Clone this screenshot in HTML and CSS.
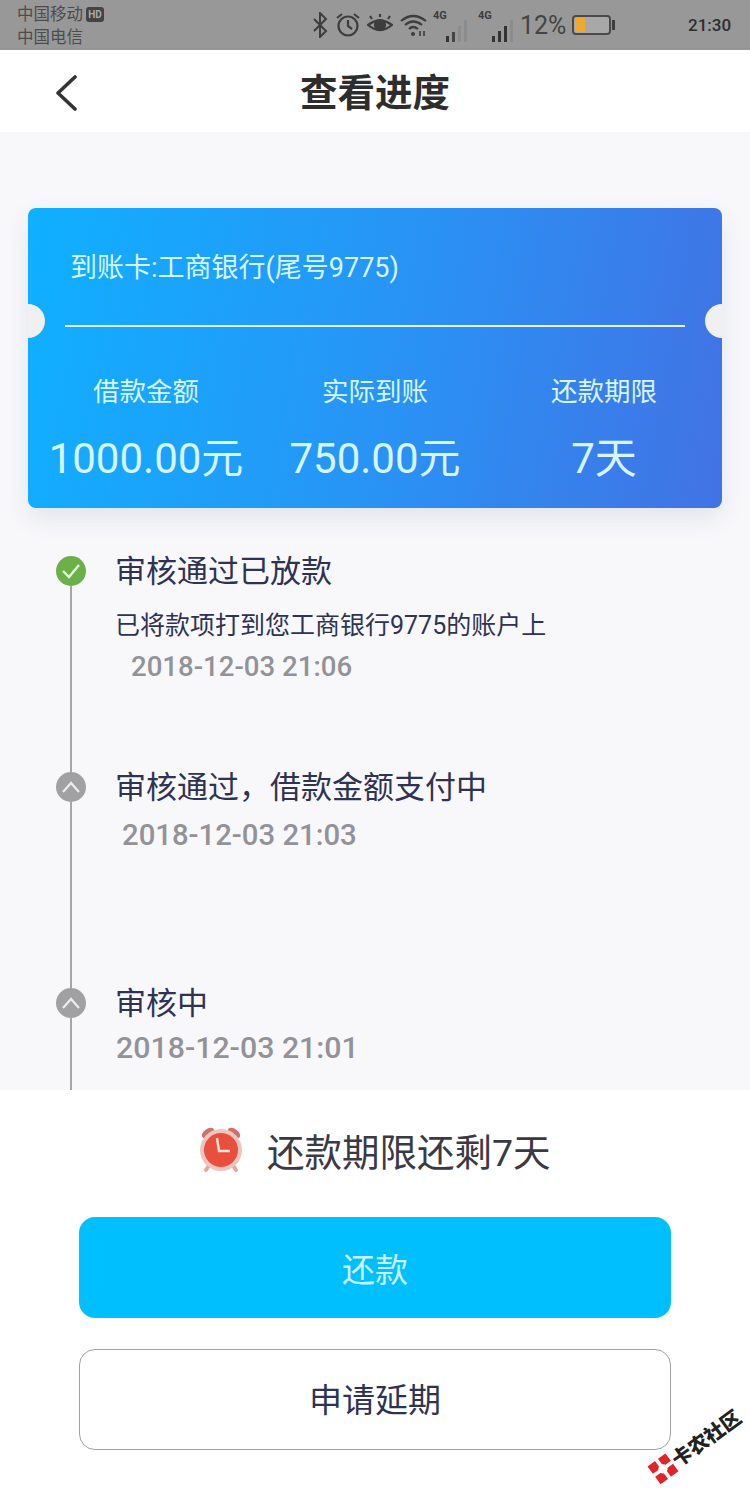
FILE: index.html
```html
<!DOCTYPE html>
<html lang="zh-CN">
<head>
    <meta charset="UTF-8">
    <meta name="viewport" content="width=device-width, initial-scale=1.0">
    <title>查看进度</title>
    <link rel="stylesheet" href="styles.css">
</head>
<body>
    <div class="page">
        <div class="status-bar">
            <div class="carriers">
                <div class="carrier">中国移动 <span class="hd">HD</span></div>
                <div class="carrier">中国电信</div>
            </div>
            <div class="status-icons">
                <svg width="16" height="26" viewBox="0 0 16 26" fill="none" stroke="#3d3d3d" stroke-width="2"><path d="M2 7l12 12-6 6V1l6 6L2 19"/></svg>
                <svg class="ic-alarm" width="26" height="26" viewBox="0 0 26 26" fill="none" stroke="#3d3d3d" stroke-width="2.2"><circle cx="13" cy="14" r="9.5"/><path d="M13 8v6l4 3M2 6l5-4M24 6l-5-4"/></svg>
                <svg class="ic-eye" width="26" height="24" viewBox="0 0 26 24" fill="none" stroke="#3d3d3d" stroke-width="2.2"><path d="M1 12q12-9 24 0q-12 10-24 0z"/><circle cx="13" cy="12" r="5" fill="#3d3d3d"/><path d="M5 6L3 3M13 4V1M21 6l2-3"/></svg>
                <svg class="ic-wifi" width="28" height="24" viewBox="0 0 28 24" fill="none" stroke="#3d3d3d" stroke-width="2.2"><path d="M1 8q12-10 25 0M5 12q8-7 17 0M9 16q4-4 9 0"/><circle cx="13" cy="21" r="2" fill="#3d3d3d" stroke="none"/><path d="M20 18v5M24 18v5" stroke-width="1.6"/></svg>
                <div class="signal">
                    <span class="net">4G</span>
                    <svg width="24" height="24" viewBox="0 0 24 24"><rect x="0" y="18" width="3" height="6" fill="#333"/><rect x="6" y="14" width="3" height="10" fill="#444"/><rect x="12" y="8" width="3" height="16" fill="#8c8c8c"/><rect x="18" y="2" width="3" height="22" fill="#8c8c8c"/></svg>
                </div>
                <div class="signal signal-b">
                    <span class="net">4G</span>
                    <svg width="24" height="24" viewBox="0 0 24 24"><rect x="0" y="18" width="3" height="6" fill="#333"/><rect x="6" y="13" width="3" height="11" fill="#333"/><rect x="12" y="8" width="3" height="16" fill="#333"/><rect x="18" y="2" width="3" height="22" fill="#8c8c8c"/></svg>
                </div>
                <span class="percent">12%</span>
                <div class="battery"><span class="battery-level"></span></div>
                <span class="battery-tip"></span>
            </div>
            <div class="clock">21:30</div>
        </div>

        <div class="nav">
            <svg class="back" width="24" height="36" viewBox="0 0 24 36" fill="none" stroke="#333" stroke-width="3.6" stroke-linecap="round" stroke-linejoin="round"><path d="M20 2L3 18l17 16"/></svg>
            <h1>查看进度</h1>
        </div>

        <div class="content">
            <div class="card">
                <div class="card-head">到账卡:工商银行(尾号9775)</div>
                <div class="card-line"></div>
                <div class="card-cols">
                    <div class="col"><div class="col-label">借款金额</div><div class="col-value">1000.00元</div></div>
                    <div class="col"><div class="col-label">实际到账</div><div class="col-value">750.00元</div></div>
                    <div class="col"><div class="col-label">还款期限</div><div class="col-value">7天</div></div>
                </div>
            </div>

            <div class="timeline">
                <div class="step">
                    <div class="rail">
                        <div class="dot dot-ok">
                            <svg width="20" height="16" viewBox="0 0 20 16" fill="none" stroke="#e6f5dc" stroke-width="2.4"><path d="M2 8l6 6L18 2"/></svg>
                        </div>
                        <div class="rail-line"></div>
                    </div>
                    <div class="step-body">
                        <div class="step-title">审核通过已放款</div>
                        <div class="step-desc">已将款项打到您工商银行9775的账户上</div>
                        <div class="step-date date-a">2018-12-03 21:06</div>
                    </div>
                </div>
                <div class="step">
                    <div class="rail">
                        <div class="dot">
                            <svg width="20" height="12" viewBox="0 0 20 12" fill="none" stroke="#ececec" stroke-width="2.2"><path d="M2 11l8-9 8 9"/></svg>
                        </div>
                        <div class="rail-line"></div>
                    </div>
                    <div class="step-body">
                        <div class="step-title">审核通过，借款金额支付中</div>
                        <div class="step-date date-b">2018-12-03 21:03</div>
                    </div>
                </div>
                <div class="step">
                    <div class="rail">
                        <div class="dot">
                            <svg width="20" height="12" viewBox="0 0 20 12" fill="none" stroke="#ececec" stroke-width="2.2"><path d="M2 11l8-9 8 9"/></svg>
                        </div>
                        <div class="rail-line"></div>
                    </div>
                    <div class="step-body">
                        <div class="step-title">审核中</div>
                        <div class="step-date date-c">2018-12-03 21:01</div>
                    </div>
                </div>
            </div>
        </div>

        <div class="footer">
            <div class="remain">
                <svg width="48" height="50" viewBox="0 0 48 50">
                    <ellipse cx="11" cy="9" rx="7" ry="4" transform="rotate(-35 11 9)" fill="#c9726e"/>
                    <ellipse cx="37" cy="9" rx="7" ry="4" transform="rotate(35 37 9)" fill="#c9726e"/>
                    <path d="M13 40l-4 6M35 40l4 6" stroke="#e2a9a0" stroke-width="4" stroke-linecap="round"/>
                    <circle cx="24" cy="26" r="21" fill="#eec5bc"/>
                    <circle cx="24" cy="26" r="17" fill="#ea4f3e"/>
                    <path d="M20 14l2 13h11" fill="none" stroke="#fbe6d8" stroke-width="2.4"/>
                </svg>
                <span>还款期限还剩7天</span>
            </div>
            <div class="btn btn-main">还款</div>
            <div class="btn btn-line">申请延期</div>
        </div>

        <div class="watermark">
            <svg width="24" height="24" viewBox="0 0 26 26"><rect x="1" y="1" width="10" height="10" fill="#e0242a"/><rect x="15" y="1" width="10" height="10" fill="#e0242a"/><rect x="1" y="15" width="10" height="10" fill="#e0242a"/><rect x="15" y="15" width="10" height="10" fill="#e0242a"/><circle cx="13" cy="13" r="5" fill="#fff"/></svg>
            <span>卡农社区</span>
        </div>
    </div>
</body>
</html>
```

FILE: styles.css
```css
* {
    box-sizing: border-box;
}

body {
    margin: 0;
    background: #fff;
    font-family: Roboto, "Noto Sans CJK SC", sans-serif;
}

.page {
    position: relative;
    width: 750px;
    height: 1500px;
    display: flex;
    flex-direction: column;
    overflow: hidden;
    background: #fff;
}

/* status bar */
.status-bar {
    height: 50px;
    background: #999899;
    display: flex;
    align-items: center;
    padding-left: 17px;
    color: #4c4c4c;
}

.carriers {
    width: 287px;
    margin-top: 2px;
    font-size: 16.5px;
    line-height: 23px;
}

.carrier {
    display: flex;
    align-items: center;
    gap: 3px;
}

.hd {
    width: 18px;
    height: 15px;
    border-radius: 3px;
    background: #444;
    color: #aaa;
    font-size: 10px;
    font-weight: 700;
    line-height: 15px;
    text-align: center;
}

.status-icons {
    width: 384px;
    height: 50px;
    display: flex;
    align-items: center;
    padding-left: 8px;
}

.ic-alarm {
    margin-left: 7px;
}

.ic-eye {
    margin-left: 6px;
}

.ic-wifi {
    margin-left: 7px;
}

.signal {
    position: relative;
    width: 37px;
    height: 34px;
    margin-left: 5px;
    display: flex;
    justify-content: flex-end;
    align-items: flex-end;
}

.signal-b {
    width: 38px;
    margin-left: 8px;
}

.net {
    position: absolute;
    left: 0;
    top: 1px;
    font-size: 11px;
    font-weight: 700;
    color: #3d3d3d;
}

.percent {
    font-size: 25px;
    color: #444;
    margin-left: 4px;
}

.battery {
    width: 39px;
    height: 20px;
    margin-left: 6px;
    border: 2px solid #4a4a4a;
    border-radius: 4px;
    background: #a9a8a9;
    padding: 1px;
}

.battery-level {
    display: block;
    width: 10px;
    height: 14px;
    background: #efa92e;
}

.battery-tip {
    width: 3px;
    height: 10px;
    margin-left: 1px;
    background: #3d3d3d;
}

.clock {
    font-size: 17px;
    font-weight: 500;
    color: #2e2e2e;
}

/* nav */
.nav {
    height: 82px;
    padding-bottom: 3px;
    display: flex;
    align-items: center;
    justify-content: center;
    position: relative;
}

.nav h1 {
    margin: 0;
    font-size: 37.5px;
    font-weight: 700;
    color: #2d2d2d;
}

.back {
    position: absolute;
    left: 55px;
    top: 25px;
}

/* main area */
.content {
    height: 958px;
    background: #f8f8fb;
    padding-top: 76px;
    overflow: hidden;
}

.card {
    position: relative;
    width: 694px;
    height: 300px;
    margin-left: 28px;
    border-radius: 8px;
    background: linear-gradient(100deg, #0fb0ff 0%, #2795f6 50%, #4272e4 100%);
    box-shadow: 0 10px 24px rgba(40, 60, 110, 0.1);
    color: #d5f6ff;
    overflow: hidden;
}

.card::before,
.card::after {
    content: "";
    position: absolute;
    top: 96px;
    width: 34px;
    height: 34px;
    border-radius: 50%;
    background: #f0eff2;
}

.card::before {
    left: -17px;
}

.card::after {
    right: -17px;
}

.card-head {
    height: 117px;
    padding: 40px 0 0 42px;
    font-size: 27px;
    line-height: 40px;
}

.card-line {
    height: 2px;
    margin: 0 37px;
    background: #e2f6ff;
}

.card-cols {
    display: grid;
    grid-template-columns: repeat(3, 229px);
    justify-content: center;
    padding-top: 46px;
    text-align: center;
}

.col-label {
    font-size: 26.5px;
    line-height: 38px;
}

.col-value {
    margin-top: 23px;
    font-size: 42px;
    line-height: 50px;
    white-space: nowrap;
}

/* timeline */
.timeline {
    padding: 48px 0 0 56px;
}

.step {
    height: 216px;
    display: flex;
    gap: 29px;
}

.rail {
    width: 30px;
    display: flex;
    flex-direction: column;
    align-items: center;
}

.dot {
    width: 30px;
    height: 30px;
    flex: none;
    border-radius: 50%;
    background: #a1a1a3;
    display: flex;
    align-items: center;
    justify-content: center;
}

.dot-ok {
    background: #6cb04a;
}

.rail-line {
    flex: 1;
    width: 2px;
    background: #a6a6a8;
}

.step-body {
    padding-top: 1px;
}

.step-title {
    font-size: 31px;
    line-height: 30px;
    color: #2f3352;
    white-space: nowrap;
}

.step-desc {
    margin-top: 24px;
    font-size: 25px;
    line-height: 30px;
    color: #2f3352;
}

.step-date {
    color: #929297;
    font-weight: 500;
    line-height: 34px;
}

.date-a {
    margin: 9px 0 0 16px;
    font-size: 27.6px;
}

.date-b {
    margin: 15px 0 0 7px;
    font-size: 29.3px;
}

.date-c {
    margin: 12px 0 0 1px;
    font-size: 30.3px;
}

/* footer */
.footer {
    flex: 1;
    background: #fff;
    padding-top: 29px;
}

.remain {
    height: 60px;
    margin-left: 197px;
    display: flex;
    align-items: center;
    gap: 22px;
    font-size: 37.5px;
    color: #3a3a44;
}

.btn {
    width: 592px;
    height: 101px;
    margin-left: 79px;
    border-radius: 16px;
    display: flex;
    align-items: center;
    justify-content: center;
}

.btn-main {
    margin-top: 38px;
    background: #00bfff;
    color: #c8f3ff;
    font-size: 33px;
}

.btn-line {
    margin-top: 31px;
    padding-bottom: 3px;
    border: 1px solid #a0a0a8;
    color: #2f3352;
    font-size: 33px;
}

.watermark {
    position: absolute;
    left: 653px;
    top: 1461px;
    display: flex;
    align-items: center;
    gap: 1px;
    transform: rotate(-36deg);
    transform-origin: left center;
    font-family: "Noto Sans CJK SC", sans-serif;
    font-size: 20px;
    font-weight: 900;
    color: #222;
    white-space: nowrap;
}
```
